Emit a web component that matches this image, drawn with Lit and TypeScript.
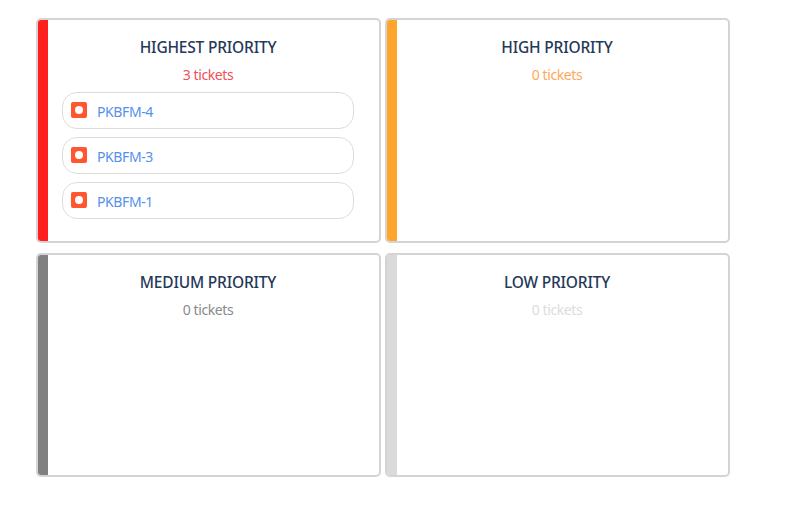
import { LitElement, html, css } from "lit";
import { customElement } from "lit/decorators.js";

const cards = [
  { title: "HIGHEST PRIORITY", color: "#ff1f1f", count: "#ef5056", tickets: ["PKBFM-4", "PKBFM-3", "PKBFM-1"] },
  { title: "HIGH PRIORITY", color: "#ffa52e", count: "#ffa85a", tickets: [] },
  { title: "MEDIUM PRIORITY", color: "#808080", count: "#8a8a8a", tickets: [] },
  { title: "LOW PRIORITY", color: "#dadada", count: "#dcdcdc", tickets: [] },
];

@customElement("app-root")
export class AppRoot extends LitElement {
  static styles = css`
    :host { display: block; font-family: "Noto Sans", "Open Sans", sans-serif; background: #fff; min-height: 522px; }
    .grid { display: grid; grid-template-columns: 345px 345px; grid-auto-rows: 224.5px; column-gap: 4px; row-gap: 10px; padding: 18px 0 0 36px; }
    .card { position: relative; box-sizing: border-box; border: 2px solid #d4d4d4; border-radius: 5px; padding: 16px 25px 0 24px; text-align: center; overflow: hidden; }
    .bar { position: absolute; left: 0; top: 0; bottom: 0; width: 10px; }
    h2 { margin: 0; font-size: 15.5px; line-height: 22px; font-weight: 500; letter-spacing: -0.2px; color: #253858; }
    .count { font-size: 14px; letter-spacing: -0.4px; line-height: 20px; margin: 7px 0 7px; }
    .pill { box-sizing: border-box; height: 37px; border: 1px solid #dcdcdc; border-radius: 15px; display: flex; align-items: center; gap: 10px; padding: 0 0 0 8px; margin-bottom: 8px; }
    .pill svg { width: 16px; height: 16px; flex: none; margin-top: -2px; }
    .pill a { font-size: 14px; letter-spacing: -0.4px; color: #5590ea; text-decoration: none; position: relative; top: 1px; }
  `;
  render() {
    return html`<div class="grid">
      ${cards.map(
        (c) => html`<section class="card">
          <div class="bar" style="background:${c.color}"></div>
          <h2>${c.title}</h2>
          <div class="count" style="color:${c.count}">${c.tickets.length} tickets</div>
          ${c.tickets.map(
            (t) => html`<div class="pill">
              <svg viewBox="0 0 16 16"><rect width="16" height="16" rx="2" fill="#ff5630"></rect><circle cx="8" cy="8" r="4" fill="#fff"></circle></svg>
              <a href="#">${t}</a>
            </div>`
          )}
        </section>`
      )}
    </div>`;
  }
}
